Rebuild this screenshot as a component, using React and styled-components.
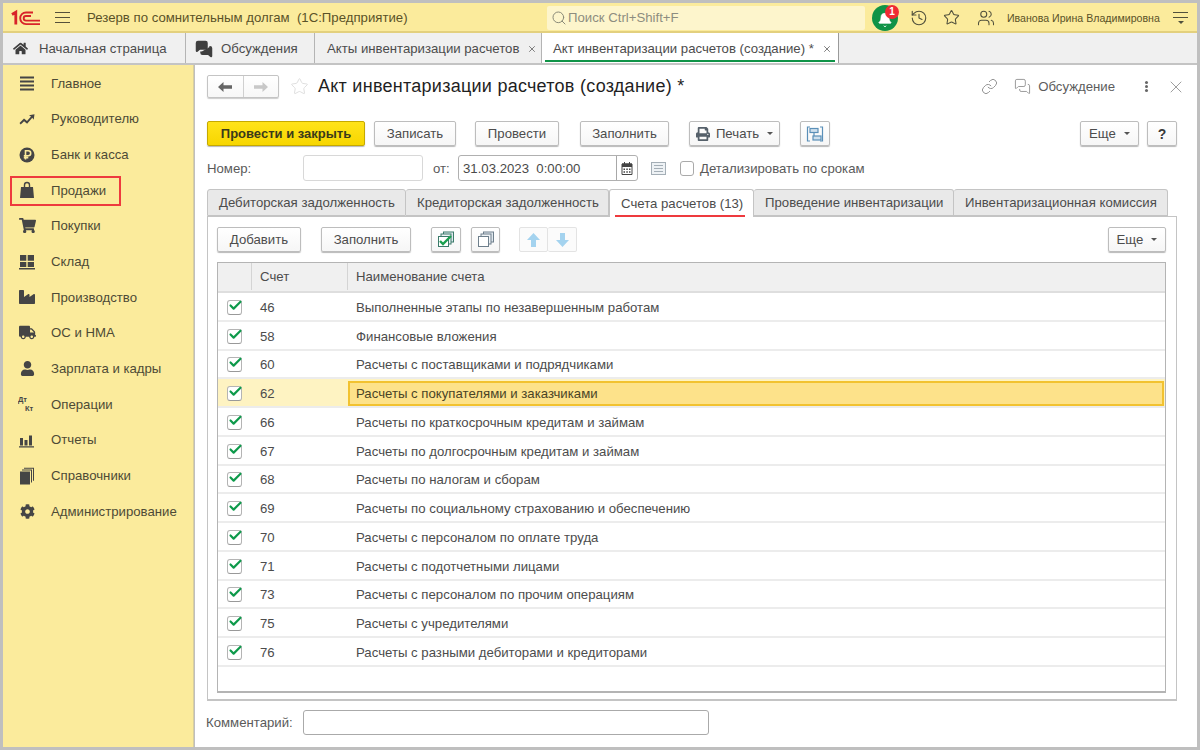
import React from "react";
import styled, { createGlobalStyle } from "styled-components";
import { FaCog, FaUser, FaTruck, FaShoppingCart, FaHome, FaPrint, FaIndustry } from "react-icons/fa";
import { History, Star, Users, Link, X, Search, Bell, MessagesSquare, Check } from "lucide-react";

const Global = createGlobalStyle`
  html, body { margin: 0; padding: 0; background: #bfbfbf; }
  * { box-sizing: border-box; }
`;

const Frame = styled.div`
  width: 1200px; height: 750px; padding: 3px; background: #bfbfbf;
  font-family: "Liberation Sans", Arial, sans-serif; font-size: 13.2px; color: #4a4a44;
  display: flex; flex-direction: column; overflow: hidden;
`;
const TopBar = styled.header`
  height: 30px; flex: none; background: #fbeb9c; border-bottom: 2px solid #e3d07e; padding-top: 1px;
  display: flex; align-items: center; position: relative;
`;
const Logo = styled.svg` margin-left: 8px; flex: none; `;
const Burger = styled.div`
  width: 15px; height: 11px; margin-left: 12px; flex: none;
  border-top: 1px solid #55503a; border-bottom: 1px solid #55503a; position: relative;
  &::after { content: ""; position: absolute; left: 0; right: 0; top: 4px; height: 1px; background: #55503a; }
`;
const AppTitle = styled.div` margin-left: 17px; width: 460px; flex: none; color: #5a5228; white-space: pre; `;
const SearchBox = styled.div`
  width: 318px; height: 24px; flex: none; background: #fdf5cc; border-radius: 2px;
  display: flex; align-items: center; gap: 1px; padding-left: 4px; color: #8d8d80;
  svg { color: #8a8a78; }
`;
const BellWrap = styled.div`
  width: 26px; height: 26px; border-radius: 50%; background: #0f9347; margin-left: 7px; flex: none;
  display: flex; align-items: center; justify-content: center; position: relative; color: #fff; padding-top: 5px;
`;
const Badge = styled.span`
  position: absolute; top: 0; right: -1px; width: 14px; height: 14px; border-radius: 50%;
  background: #ee2b33; color: #fff; font-size: 10px; font-weight: 700;
  display: flex; align-items: center; justify-content: center;
`;
const TopIcon = styled.div`
  flex: none; margin-left: ${p => p.$ml}px; display: flex; color: #50503c;
`;
const UserName = styled.div` margin-left: 12px; width: 158px; flex: none; font-size: 10.6px; color: #5a5228; white-space: nowrap; `;
const MoreLines = styled.div`
  width: 15px; height: 12px; flex: none; margin-left: 8px; position: relative;
  border-top: 1px solid #50503c;
  &::before { content: ""; position: absolute; left: 0; right: 0; top: 4px; height: 1px; background: #50503c; }
  &::after { content: ""; position: absolute; left: 5px; top: 8px; border: 3px solid transparent; border-top: 3px solid #50503c; }
`;

const TabBar = styled.nav`
  height: 32px; flex: none; background: #f0f0f0; border-bottom: 2px solid #c4c4c4; display: flex; color: #4c4c4c;
`;
const OpenTab = styled.div`
  width: ${p => p.$w}px; flex: none; display: flex; align-items: center; white-space: nowrap;
  padding: 1px 0 0 ${p => p.$pl}px; position: relative;
  border-right: 1px solid ${p => (p.$active ? "#9a9a9a" : "#b4b4b4")};
  background: ${p => (p.$active ? "#fff" : "transparent")};
  ${p => p.$active && `&::after { content: ""; position: absolute; left: 3px; right: 3px; bottom: 1px; height: 2px; background: #0f9347; }`}
  svg.lead { margin-right: ${p => p.$gap}px; flex: none; color: #3f3f3f; }
  svg.close { position: absolute; right: ${p => p.$cr}px; top: 11px; color: #666; }
`;

const Body = styled.div` flex: 1; display: flex; min-height: 0; `;
const Side = styled.aside`
  width: 191px; flex: none; background: #fbeb9c; border-right: 1px solid #d9cf9e; padding-top: .5px;
`;
const SideItem = styled.div`
  height: 35.67px; display: flex; align-items: center; color: #4d4a36; position: relative;
  ${p => p.$marked && `&::after { content: ""; position: absolute; left: 7px; top: 4px; width: 107px; height: 26px; border: 2px solid #ee3a3e; }`}
`;
const SideIcon = styled.span`
  width: 48px; flex: none; display: flex; justify-content: center; color: #454545;
`;
const Main = styled.main`
  flex: 1; background: #fff; margin-left: 1px; padding: 10px 20px 0 12px; display: flex; flex-direction: column; min-width: 0;
`;
const TitleRow = styled.div` height: 23px; display: flex; align-items: center; flex: none; `;
const NavGroup = styled.div`
  width: 72px; height: 23px; flex: none; display: flex; border: 1px solid #c4c4c4; border-radius: 2px;
  box-shadow: 0 1px 1px rgba(0,0,0,.2); background: linear-gradient(#fff, #f7f7f7);
`;
const NavCell = styled.div`
  flex: 1; display: flex; align-items: center; justify-content: center;
  color: ${p => (p.$off ? "#c8c8c8" : "#666")};
  & + & { border-left: 1px solid #d0d0d0; }
`;
const TitleStar = styled.span` margin-left: 11px; display: flex; color: #ddd; `;
const Heading = styled.h1` margin: 0 0 0 9px; font-size: 18px; font-weight: 400; color: #1f1f1f; white-space: nowrap; letter-spacing: .26px; `;
const Grow = styled.div` flex: 1; `;
const TitleAction = styled.span`
  display: flex; align-items: center; flex: none; margin-left: ${p => p.$ml || 0}px; margin-right: ${p => p.$mr || 0}px; color: #8a8a8a; gap: 7px;
`;
const ActionText = styled.span` color: #5c5c5c; `;
const Dots = styled.span`
  width: 3px; height: 3px; border-radius: 50%; background: #666; box-shadow: 0 4px 0 #666, 0 -4px 0 #666; margin-left: 30px; flex: none;
`;

const Bar = styled.div` display: flex; flex: none; height: 26px; margin-top: ${p => p.$mt}px; align-items: flex-start; `;
const Btn = styled.button`
  width: ${p => p.$w}px; height: 25px; flex: none; margin-left: ${p => p.$ml || 0}px; padding: 0;
  display: flex; align-items: center; justify-content: center; gap: ${p => p.$gap || 6}px;
  font: inherit; color: #4c4c4c; border-radius: 2px; border: 1px solid #bdbdbd;
  background: linear-gradient(#fff, #f6f6f6); box-shadow: 0 1px 1px rgba(0,0,0,.28);
`;
const PrimaryBtn = styled(Btn)`
  background: linear-gradient(#ffe31a, #f7d600); border-color: #c5a900; color: #3a3a1a; font-weight: 700; font-size: 13px;
`;
const HelpBtn = styled(Btn)` font-weight: 700; font-size: 14px; color: #3a3a3a; `;
const FlatBtn = styled(Btn)`
  box-shadow: none; border-color: #e3e3e3; background: #fbfbfb;
  ${p => p.$joined && "border-left: none;"}
`;
const Caret = styled.i`
  width: 0; height: 0; border: 3px solid transparent; border-top: 3px solid #555; margin: 3px 0 0 2px;
`;

const FormRow = styled.div` display: flex; align-items: center; height: 26px; flex: none; margin-top: ${p => p.$mt || 8}px; color: #555; `;
const Field = styled.div`
  width: ${p => p.$w}px; height: ${p => p.$h || 26}px; flex: none; margin-left: ${p => p.$ml}px;
  border: 1px solid ${p => p.$c || "#d8d8d8"}; border-radius: 3px; background: #fff; display: flex; align-items: center;
`;
const Label = styled.span` flex: none; width: ${p => p.$w}px; margin-left: ${p => p.$ml || 0}px; white-space: nowrap; color: #5a5a5a; `;
const DateText = styled.span` flex: 1; padding-left: 4px; color: #4a4a4a; white-space: pre; `;
const DateBtn = styled.span`
  width: 21px; height: 100%; border-left: 1px solid #a8a8a8; display: flex; align-items: center; justify-content: center;
`;
const ListIcon = styled.svg` margin-left: 13px; flex: none; `;
const PlainCheck = styled.span`
  width: 14px; height: 15px; flex: none; margin-left: 14px; border: 1px solid #aaa; border-radius: 3px; background: #fff;
`;

const Tabs = styled.div` display: flex; height: 27px; margin-top: 8px; flex: none; position: relative; z-index: 1; `;
const Tab = styled.div`
  width: ${p => p.$w}px; flex: none; height: ${p => (p.$active ? 28 : 27)}px; padding-left: 11px; display: flex; align-items: center; white-space: nowrap; position: relative;
  color: #4c4c4c; border: 1px solid #c4c4c4; border-left-width: ${p => (p.$first || p.$active ? 1 : 0)}px;
  ${p => p.$active && "border-bottom: none;"}
  border-radius: 3px 3px 0 0;
  background: ${p => (p.$active ? "#fff" : "#e9e9e9")};
  ${p => p.$active && `&::after { content: ""; position: absolute; left: 5px; right: 8px; bottom: 0; height: 2px; background: #ee3a3e; }`}
`;
const Panel = styled.section`
  height: 485px; flex: none; border: 1px solid #c4c4c4; border-bottom-width: 2px; padding: 10px 10px 0 9px; display: flex; flex-direction: column;
`;
const PanelBar = styled.div` display: flex; height: 25px; flex: none; `;
const Grid = styled.div`
  margin: 10px 0 0 0; height: 431px; flex: none; border: 1px solid #b4b4b4; border-bottom-width: 2px; display: flex; flex-direction: column;
`;
const HeadRow = styled.div`
  height: 30px; flex: none; display: grid; grid-template-columns: 33px 96px 1fr; background: #f0f0f0; border-bottom: 2px solid #dedede; color: #4c4c4c; padding-bottom: 1px;
`;
const HeadCell = styled.div`
  display: flex; align-items: center; padding-left: 8px; border-left: ${p => (p.$first ? "none" : "1px solid #d4d4d4")};
`;
const Row = styled.div`
  height: 28.75px; flex: none; display: grid; grid-template-columns: 33px 96px 1fr; border-bottom: 2px solid #ececec; color: #4c4c4c; padding-top: 2px;
  background: ${p => (p.$sel ? "#fef3c2" : "#fff")};
`;
const Cell = styled.div`
  display: flex; align-items: center; padding-left: 9px; white-space: nowrap;
  ${p => p.$sel && "margin: 0 1px; padding-left: 6px; background: #fde28a; border: 2px solid #f2c230; color: #4a4426;"}
`;
const CheckCell = styled.div` display: flex; align-items: center; padding-left: 9px; `;
const RowCheck = styled.span`
  width: 15px; height: 15px; border: 1px solid #b4b4b4; border-bottom-color: #999; border-radius: 3px; background: #fff; position: relative;
  svg { position: absolute; left: 0; top: -3px; color: #0e9a4b; }
`;
const CommentRow = styled(FormRow)` margin-left: -1px; height: 25px; `;

const Plain = ({ children }) => <svg width={18} height={18} viewBox="0 0 18 18" fill="currentColor">{children}</svg>;

const icons = {
  main: <Plain><path d="M2 2.5h14v2H2zM2 6.5h14v2H2zM2 10.5h14v2H2zM2 14.5h14v2H2z" /></Plain>,
  trend: <Plain><path d="M1.5 13l4.5-4.5 3 2.5 4-4.5-2-1.2 5.5-1-.8 5.4-1.4-1.9-5.2 5.9-3-2.5-3.4 3.4z" /></Plain>,
  bank: <Plain><circle cx="9" cy="9" r="7.5" /><path d="M7.5 13.5V4.8H10.2a2.4 2.4 0 0 1 0 5H5.8M5.8 11.6h4.5" fill="none" stroke="#fbeb9c" strokeWidth="1.6" /></Plain>,
  bag: <Plain><path d="M3 6h2.8V4a3.2 3.2 0 0 1 6.4 0v2H15l1 11H2zM7.2 6h3.6V4a1.8 1.8 0 0 0-3.6 0z" fillRule="evenodd" /></Plain>,
  cart: <FaShoppingCart size={17} />,
  stock: <Plain><path d="M2 2h6.3v5.8H2zM9.7 2H16v5.8H9.7zM2 9h6.3v5H2zM9.7 9H16v5H9.7zM1 15h16v1.6H1z" /></Plain>,
  factory: <FaIndustry size={16} />,
  truck: <FaTruck size={17} />,
  person: <FaUser size={15} />,
  ops: (
    <svg width="18" height="18" viewBox="0 0 18 18" fill="currentColor" fontFamily="Liberation Sans, sans-serif" fontWeight="700" fontSize="7.5">
      <text x="0" y="7">Дт</text><text x="7" y="16">Кт</text>
    </svg>
  ),
  reports: <Plain><path d="M2 7h3v7.5H2zM6.5 9h3v5.5h-3zM11 4.5h3v10h-3zM1 15.2h15v1.3H1z" /></Plain>,
  books: <Plain><path d="M2 4.5h10v13H2zM4 2.5h10v13h-1V3.5H4zM6 .8h10v13h-1V1.8H6z" /></Plain>,
  admin: <FaCog size={15} />,
};
const menu = [
  ["Главное", "main"], ["Руководителю", "trend"], ["Банк и касса", "bank"], ["Продажи", "bag", true], ["Покупки", "cart"],
  ["Склад", "stock"], ["Производство", "factory"], ["ОС и НМА", "truck"], ["Зарплата и кадры", "person"], ["Операции", "ops"],
  ["Отчеты", "reports"], ["Справочники", "books"], ["Администрирование", "admin"],
];
const accounts = [
  ["46", "Выполненные этапы по незавершенным работам"], ["58", "Финансовые вложения"], ["60", "Расчеты с поставщиками и подрядчиками"],
  ["62", "Расчеты с покупателями и заказчиками", true], ["66", "Расчеты по краткосрочным кредитам и займам"], ["67", "Расчеты по долгосрочным кредитам и займам"],
  ["68", "Расчеты по налогам и сборам"], ["69", "Расчеты по социальному страхованию и обеспечению"], ["70", "Расчеты с персоналом по оплате труда"],
  ["71", "Расчеты с подотчетными лицами"], ["73", "Расчеты с персоналом по прочим операциям"], ["75", "Расчеты с учредителями"], ["76", "Расчеты с разными дебиторами и кредиторами"],
];
const docTabs = [
  ["Дебиторская задолженность", 199], ["Кредиторская задолженность", 203], ["Счета расчетов (13)", 145, true],
  ["Проведение инвентаризации", 200], ["Инвентаризационная комиссия", 214],
];

const StackIcon = ({ checked }) => (
  <svg width="20" height="18" viewBox="0 0 20 18" fill="#fff" stroke={checked ? "#3b7a6a" : "#6e7f8c"} strokeWidth="1">
    <rect x="7.5" y="1" width="10" height="10" fill="#e0e8ee" />
    <rect x="5" y="3" width="10" height="10" fill="#eef2f5" />
    <rect x="2.5" y="5.5" width="10" height="10" />
    {checked && <path d="M4 10l3 3 8-8" fill="none" stroke="#1aa04f" strokeWidth="2.4" />}
  </svg>
);
const SideArrow = ({ flip, fill }) => (
  <svg width="14" height="10" viewBox="0 0 14 10" fill={fill} style={flip ? { transform: "scaleX(-1)" } : undefined}>
    <path d="M0 5L5.5 0v3.2H14v3.6H5.5V10z" />
  </svg>
);
const VertArrow = ({ down }) => (
  <svg width="13" height="14" viewBox="0 0 13 14" fill="#a4d3ef" style={down ? { transform: "scaleY(-1)" } : undefined}>
    <path d="M6.5 0L13 7H9v7H4V7H0z" />
  </svg>
);

export default function App() {
  return (
    <Frame>
      <Global />
      <TopBar>
        <Logo width="32" height="18" viewBox="0 0 32 18" fill="none">
          <path d="M1 5.5L4.8 3.2V15.5" stroke="#d8232a" strokeWidth="2.8" />
          <path d="M22 3.5H15a5.8 5.8 0 0 0 0 11.6h14" stroke="#d8232a" strokeWidth="1.9" />
          <path d="M20 7h-5a2.3 2.3 0 0 0 0 4.6h14" stroke="#d8232a" strokeWidth="1.9" />
        </Logo>
        <Burger />
        <AppTitle>Резерв по сомнительным долгам  (1С:Предприятие)</AppTitle>
        <SearchBox><Search size={16} strokeWidth={1.5} />Поиск Ctrl+Shift+F</SearchBox>
        <BellWrap><Bell size={16} fill="#fff" strokeWidth={1} /><Badge>1</Badge></BellWrap>
        <TopIcon $ml={12}><History size={18} strokeWidth={1.5} /></TopIcon>
        <TopIcon $ml={15}><Star size={17} strokeWidth={1.5} /></TopIcon>
        <TopIcon $ml={17}><Users size={18} strokeWidth={1.4} /></TopIcon>
        <UserName>Иванова Ирина Владимировна</UserName>
        <MoreLines />
      </TopBar>
      <TabBar>
        <OpenTab $w={183} $pl={10} $gap={11}><FaHome className="lead" size={15} />Начальная страница</OpenTab>
        <OpenTab $w={129} $pl={9} $gap={8}><MessagesSquare className="lead" size={18} fill="#3f3f3f" />Обсуждения</OpenTab>
        <OpenTab $w={227} $pl={12} $cr={4}>Акты инвентаризации расчетов<X className="close" size={10} /></OpenTab>
        <OpenTab $w={297} $pl={11} $cr={6} $active>Акт инвентаризации расчетов (создание) *<X className="close" size={10} /></OpenTab>
      </TabBar>
      <Body>
        <Side>
          {menu.map(([t, i, m]) => (
            <SideItem key={t} $marked={m}><SideIcon>{icons[i]}</SideIcon>{t}</SideItem>
          ))}
        </Side>
        <Main>
          <TitleRow>
            <NavGroup>
              <NavCell><SideArrow fill="currentColor" /></NavCell>
              <NavCell $off><SideArrow flip fill="currentColor" /></NavCell>
            </NavGroup>
            <TitleStar><Star size={19} strokeWidth={1.2} /></TitleStar>
            <Heading>Акт инвентаризации расчетов (создание) *</Heading>
            <Grow />
            <TitleAction><Link size={17} strokeWidth={1.3} /></TitleAction>
            <TitleAction $ml={16}><MessagesSquare size={17} strokeWidth={1.2} /><ActionText>Обсуждение</ActionText></TitleAction>
            <Dots />
            <TitleAction $ml={18} $mr={-9}><X size={20} strokeWidth={1} /></TitleAction>
          </TitleRow>
          <Bar $mt={23}>
            <PrimaryBtn $w={158}>Провести и закрыть</PrimaryBtn>
            <Btn $w={82} $ml={9}>Записать</Btn>
            <Btn $w={84} $ml={19}>Провести</Btn>
            <Btn $w={89} $ml={21}>Заполнить</Btn>
            <Btn $w={91} $ml={20}><FaPrint size={14} color="#55606a" />Печать<Caret /></Btn>
            <Btn $w={30} $ml={20}>
              <svg width="18" height="18" viewBox="0 0 18 18" fill="none" stroke="#5a8fb8" strokeWidth="1.2">
                <path d="M4 2H1.5v14H4M14 2h2.5v14H14" /><rect x="4" y="3.5" width="8" height="4" fill="#cfe0ee" /><rect x="7" y="11" width="8" height="4" fill="#cfe0ee" /><path d="M8 7.5V11" />
              </svg>
            </Btn>
            <Grow />
            <Btn $w={59}>Еще<Caret /></Btn>
            <HelpBtn $w={30} $ml={8}>?</HelpBtn>
          </Bar>
          <FormRow>
            <Label $w={96}>Номер:</Label>
            <Field $w={120} $ml={0} />
            <Label $w={16} $ml={10}>от:</Label>
            <Field $w={180} $ml={9} $c="#b0b0b0">
              <DateText>31.03.2023  0:00:00</DateText>
              <DateBtn>
                <svg width="12" height="13" viewBox="0 0 12 13">
                  <path d="M1 2h10v10.5H1z" fill="none" stroke="#444" /><path d="M1 1.5h10V5H1zM3 0h1v2H3zM8 0h1v2H8z" fill="#444" />
                  <path d="M2.5 6.5h1.5V8H2.5zM5.3 6.5h1.5V8H5.3zM8 6.5h1.5V8H8zM2.5 9.3h1.5v1.5H2.5zM5.3 9.3h1.5v1.5H5.3zM8 9.3h1.5v1.5H8z" fill="#444" />
                </svg>
              </DateBtn>
            </Field>
            <ListIcon width="15" height="13" viewBox="0 0 15 13" fill="#eef2f5" stroke="#a4aeb6">
              <rect x=".5" y=".5" width="14" height="12" /><path d="M3 3.5h9M3 6.5h9M3 9.5h9" />
            </ListIcon>
            <PlainCheck />
            <Label $w={170} $ml={6}>Детализировать по срокам</Label>
          </FormRow>
          <Tabs>
            {docTabs.map(([t, w, a], i) => <Tab key={t} $w={w} $active={a} $first={i === 0}>{t}</Tab>)}
          </Tabs>
          <Panel>
            <PanelBar>
              <Btn $w={84}>Добавить</Btn>
              <Btn $w={90} $ml={20}>Заполнить</Btn>
              <Btn $w={30} $ml={20}><StackIcon checked /></Btn>
              <Btn $w={29} $ml={10}><StackIcon /></Btn>
              <FlatBtn $w={29} $ml={19}><VertArrow /></FlatBtn>
              <FlatBtn $w={29} $joined><VertArrow down /></FlatBtn>
              <Grow />
              <Btn $w={58}>Еще<Caret /></Btn>
            </PanelBar>
            <Grid>
              <HeadRow>
                <HeadCell $first />
                <HeadCell>Счет</HeadCell>
                <HeadCell>Наименование счета</HeadCell>
              </HeadRow>
              {accounts.map(([n, t, s]) => (
                <Row key={n} $sel={s}>
                  <CheckCell><RowCheck><Check size={15} strokeWidth={3.4} /></RowCheck></CheckCell>
                  <Cell>{n}</Cell>
                  <Cell $sel={s}>{t}</Cell>
                </Row>
              ))}
            </Grid>
          </Panel>
          <CommentRow $mt={9}>
            <Label $w={97}>Комментарий:</Label>
            <Field $w={406} $h={25} $ml={0} $c="#aaa" />
          </CommentRow>
        </Main>
      </Body>
    </Frame>
  );
}
